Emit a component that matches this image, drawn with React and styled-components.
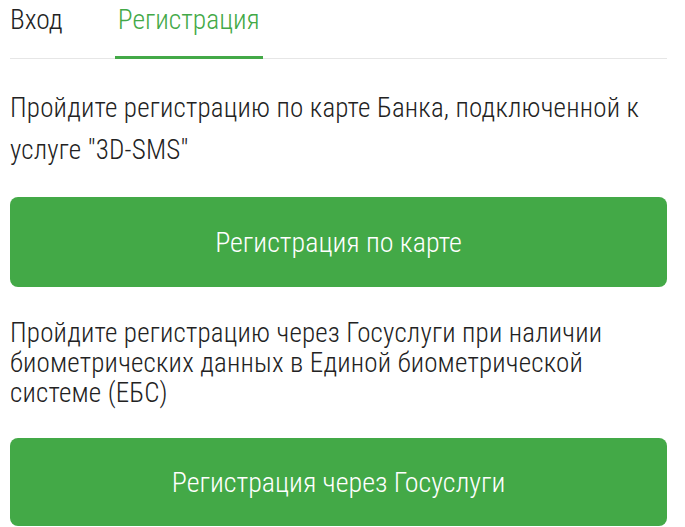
import styled, { createGlobalStyle } from 'styled-components';

const GlobalStyle = createGlobalStyle`
  body {
    margin: 0;
    background: #fff;
    font-family: "Liberation Sans Narrow", "Arial Narrow", "Roboto Condensed", Roboto, sans-serif;
    font-weight: 300;
    color: #222;
  }
`;

const green = '#43a947';

const Page = styled.div`
  padding: 0 18px 0 10px;
`;

const Tabs = styled.div`
  display: flex;
  height: 58px;
  border-bottom: 1px solid #e6e6e6;
`;

const Tab = styled.div`
  display: flex;
  align-items: flex-start;
  justify-content: center;
  padding-top: 3px;
  margin-right: ${(p) => (p.$first ? '52px' : '0')};
  width: ${(p) => (p.$first ? 'auto' : '148px')};
  font-size: 27.5px;
  font-weight: 300;
  color: ${(p) => (p.$active ? green : '#222')};
  border-bottom: 3px solid ${(p) => (p.$active ? green : 'transparent')};
  margin-bottom: -1px;
  box-sizing: border-box;
`;

const Text = styled.p`
  margin: ${(p) => p.$top}px 0 0;
  font-size: 27px;
  font-weight: 300;
  letter-spacing: 0.2px;
  line-height: ${(p) => p.$lh}px;
  color: #222;
`;

const Button = styled.button`
  display: block;
  width: 100%;
  height: ${(p) => p.$h}px;
  margin-top: ${(p) => p.$top}px;
  border: 0;
  border-radius: 8px;
  background: ${green};
  color: #fff;
  font-family: inherit;
  font-size: 28px;
  font-weight: 300;
  cursor: pointer;
`;

const App = () => {
  return (
    <Page>
      <GlobalStyle />
      <Tabs>
        <Tab $first>Вход</Tab>
        <Tab $active>Регистрация</Tab>
      </Tabs>
      <Text $top={28} $lh={42}>
        Пройдите регистрацию по карте Банка, подключенной к услуге "3D-SMS"
      </Text>
      <Button $top={26} $h={90}>Регистрация по карте</Button>
      <Text $top={31} $lh={30}>
        Пройдите регистрацию через Госуслуги при наличии биометрических данных в Единой биометрической системе (ЕБС)
      </Text>
      <Button $top={30} $h={88}>Регистрация через Госуслуги</Button>
    </Page>
  );
};

export default App;
